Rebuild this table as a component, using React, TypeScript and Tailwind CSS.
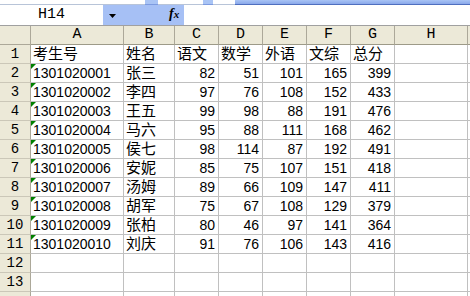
import React from 'react';

const cols = ['A', 'B', 'C', 'D', 'E', 'F', 'G', 'H', ''];

const heads = ['考生号', '姓名', '语文', '数学', '外语', '文综', '总分'];

const rows: [string, string, number, number, number, number, number][] = [
  ['1301020001', '张三', 82, 51, 101, 165, 399],
  ['1301020002', '李四', 97, 76, 108, 152, 433],
  ['1301020003', '王五', 99, 98, 88, 191, 476],
  ['1301020004', '马六', 95, 88, 111, 168, 462],
  ['1301020005', '侯七', 98, 114, 87, 192, 491],
  ['1301020006', '安妮', 85, 75, 107, 151, 418],
  ['1301020007', '汤姆', 89, 66, 109, 147, 411],
  ['1301020008', '胡军', 75, 67, 108, 129, 379],
  ['1301020009', '张柏', 80, 46, 97, 141, 364],
  ['1301020010', '刘庆', 91, 76, 106, 143, 416],
];

const mono = { fontFamily: '"Liberation Mono", monospace' };
const cellFont = { fontFamily: '"Liberation Sans", "Noto Sans CJK SC", sans-serif' };

function Cell({
  children,
  right,
  cjk,
  flag,
}: {
  children?: React.ReactNode;
  right?: boolean;
  cjk?: boolean;
  flag?: boolean;
}) {
  return (
    <div
      className={
        'relative flex items-end border-r border-b border-[#c0c0c0] overflow-hidden whitespace-nowrap text-black leading-[14px] pb-[2px] ' +
        (right ? 'justify-end pr-[3px]' : 'pl-[2px]') +
        (cjk ? ' text-[15px]' : ' text-[14px]')
      }
      style={cellFont}
    >
      {flag && (
        <span className="absolute left-0 top-0 w-0 h-0 border-t-[5px] border-r-[5px] border-t-[#008000] border-r-transparent" />
      )}
      {children}
    </div>
  );
}

function RowHead({ n }: { n?: number }) {
  return (
    <div
      className="flex items-end justify-center bg-[#ece9d8] border-r border-r-[#aca899] border-b border-b-[#cbc7b8] text-[14px] leading-[14px] pb-[2px] text-black"
      style={mono}
    >
      {n}
    </div>
  );
}

export default function App() {
  return (
    <div className="w-[470px] h-[296px] overflow-hidden bg-white select-none">
      {/* toolbar remnant */}
      <div className="flex h-[5px]">
        <div className="w-[145px] bg-white border-b border-[#b8c4d8]" />
        <div className="w-[13px] bg-[#a9c4f5] border-b border-[#7d9be0]" />
        <div className="w-[45px] bg-white border-b border-[#b8c4d8]" />
        <div className="w-[10px] bg-[#a9c4f5] border-b border-[#7d9be0]" />
        <div className="w-[22px] bg-white border-b border-[#b8c4d8]" />
        <div className="flex-1 bg-gradient-to-b from-[#a9c4f5] to-[#8aa8ea] border-b border-[#4f6fbf]" />
      </div>

      {/* formula bar */}
      <div className="flex h-[21px] border-b border-[#a0a0a0]">
        <div
          className="w-[103px] bg-white flex items-center justify-center text-[15px] text-black"
          style={mono}
        >
          H14
        </div>
        <div className="w-[81px] bg-[#a6c0f5] relative">
          <svg className="absolute left-[6px] top-[9px]" width="7" height="4" viewBox="0 0 7 4">
            <path d="M0 0h7L3.5 4z" fill="#000" />
          </svg>
          <span
            className="absolute left-[66px] top-[1px] text-[14px] italic font-bold text-black leading-[16px]"
            style={{ fontFamily: '"Liberation Serif", serif' }}
          >
            f<span className="text-[11px]">x</span>
          </span>
        </div>
        <div className="flex-1 bg-white" />
      </div>

      {/* sheet */}
      <div className="grid grid-cols-[31px_93px_51px_44px_44px_44px_44px_44px_73px_1fr] auto-rows-[19px]">
        <div className="bg-[#ece9d8] border-r border-b border-[#aca899]" />
        {cols.map((c, i) => (
          <div
            key={i}
            className="flex items-center justify-center bg-[#ece9d8] border-r border-r-[#aca899] border-b border-b-[#9d9a88] text-[15px] text-black"
            style={mono}
          >
            {c}
          </div>
        ))}

        <RowHead n={1} />
        {heads.map((h, i) => (
          <Cell key={i} cjk>
            {h}
          </Cell>
        ))}
        <Cell />
        <Cell />

        {rows.map((r, ri) => (
          <React.Fragment key={ri}>
            <RowHead n={ri + 2} />
            <Cell flag>{r[0]}</Cell>
            <Cell cjk>{r[1]}</Cell>
            <Cell right>{r[2]}</Cell>
            <Cell right>{r[3]}</Cell>
            <Cell right>{r[4]}</Cell>
            <Cell right>{r[5]}</Cell>
            <Cell right>{r[6]}</Cell>
            <Cell />
            <Cell />
          </React.Fragment>
        ))}

        {[12, 13, 0].map((n) => (
          <React.Fragment key={n}>
            <RowHead n={n || undefined} />
            {cols.map((_, i) => (
              <Cell key={i} />
            ))}
          </React.Fragment>
        ))}
      </div>
    </div>
  );
}
